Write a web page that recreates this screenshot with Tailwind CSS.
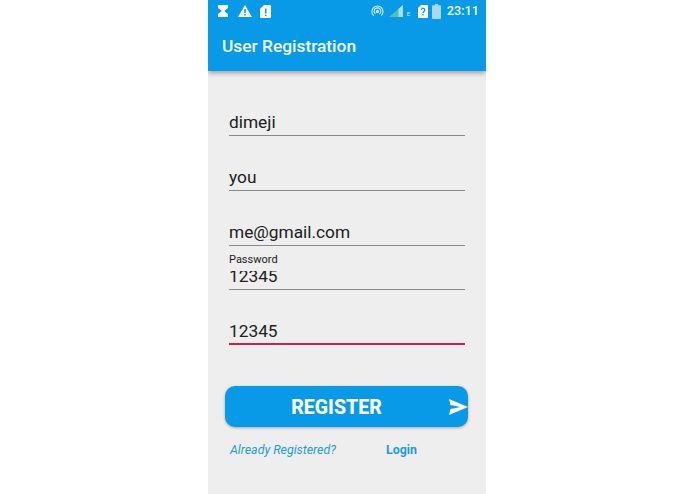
<!DOCTYPE html>
<html lang="en">
<head>
  <meta charset="UTF-8">
  <title>User Registration</title>
  <script src="https://cdn.jsdelivr.net/npm/@tailwindcss/browser@4"></script>
</head>
<body class="bg-white h-[494px] overflow-hidden antialiased font-['Roboto',sans-serif]">
  <div class="w-[278px] h-[494px] ml-[208px] bg-[#eeeeee] flex flex-col overflow-hidden">
    <!-- header -->
    <div class="h-[71px] shrink-0 bg-[#089ae6] shadow-[0_2px_5px_rgba(0,0,0,0.35)] z-10">
      <div class="h-[22px] flex items-center pl-[10px] pr-[7px] text-white">
        <svg class="w-[10px] h-[12px]" viewBox="0 0 10 12"><path fill="#fff" d="M0 0h10v3L6.200 6 10 9v3H0V9l3.800-3L0 3z"/></svg>
        <svg class="w-[14px] h-[12px] ml-[10px]" viewBox="0 0 14 12"><path fill="#fff" fill-rule="evenodd" d="M7 0l7 12H0zM6.200 4v4h1.600V4zM6.200 9v1.500h1.600V9z"/></svg>
        <svg class="w-[11px] h-[13px] ml-[8px]" viewBox="0 0 11 13"><path fill="#fff" fill-rule="evenodd" d="M4 0h6a1 1 0 0 1 1 1v11a1 1 0 0 1-1 1H1a1 1 0 0 1-1-1V4zM5 3.500v5h1.500v-5zM5 9.500v1.600h1.500V9.500z"/></svg>
        <svg class="w-[13px] h-[13px] ml-auto" viewBox="0 0 14 14" fill="none" stroke="#d5edfb" stroke-width="1.200"><path d="M3 11.500a6 6 0 1 1 8 0"/><path d="M4.800 9.500a3.600 3.600 0 1 1 4.400 0"/><circle cx="7" cy="7" r="1.200" fill="#d5edfb"/></svg>
        <svg class="w-[14px] h-[12px] ml-[5px]" viewBox="0 0 14 12"><path fill="#4fc3b0" d="M14 0v12H0z"/><path fill="#a8dcf5" d="M14 0v12H9.500V4z"/></svg>
        <span class="w-[5px] text-[6px] leading-none ml-[4px] mt-[5px] text-[#d5edfb]">E</span>
        <svg class="w-[10px] h-[13px] ml-[6px]" viewBox="0 0 10 13"><path fill="#fff" d="M3 0h6.300a.7.7 0 0 1 .7.7v11.600a.7.7 0 0 1-.7.7H.7a.7.7 0 0 1-.7-.7V3z"/><path fill="none" stroke="#089ae6" stroke-width="1.300" d="M3.400 4.900a1.700 1.700 0 1 1 2.600 1.500c-.7.4-1 .8-1 1.600M5 9v1.500"/></svg>
        <svg class="w-[9px] h-[15px] ml-[4px]" viewBox="0 0 9 15"><path fill="#a9d8f3" d="M2.800 0h3.400v1.200H8a1 1 0 0 1 1 1V14a1 1 0 0 1-1 1H1a1 1 0 0 1-1-1V2.200a1 1 0 0 1 1-1h1.800z"/></svg>
        <span class="text-[12.700px] font-medium text-[#f2faff] ml-[6px] leading-none">23:11</span>
      </div>
      <h1 class="ml-[14px] mt-[12px] text-[17.350px] leading-[24px] font-medium text-[#f4fbff]">User Registration</h1>
    </div>

    <!-- form -->
    <div class="px-[21px] pt-[40px] flex flex-col text-[17.300px] text-[#202020]">
      <div class="h-[25px] border-b border-[#8a8a8a] w-[236px] leading-[22px]">dimeji</div>
      <div class="h-[25px] mt-[30px] border-b border-[#8a8a8a] w-[236px] leading-[22px]">you</div>
      <div class="h-[25px] mt-[30px] border-b border-[#8a8a8a] w-[236px] leading-[22px]">me@gmail.com</div>
      <div class="h-[44px] border-b border-[#8a8a8a] w-[236px] relative overflow-hidden">
        <div class="absolute left-0 top-[19px] leading-[22px]">12345</div>
        <div class="absolute left-0 top-[7px] h-[18px] w-full bg-[#eeeeee] text-[11px] leading-[13px]">Password</div>
      </div>
      <div class="h-[25px] mt-[30px] border-b-2 border-[#cc1f56] w-[236px] leading-[22px]">12345</div>
    </div>

    <!-- register button -->
    <div class="relative flex items-center justify-center ml-[17px] mt-[41px] w-[243px] h-[41px] pr-[20px] pt-[2px] rounded-[10px] bg-[#089ae6] shadow-[0_1px_3px_rgba(0,0,0,0.3)] text-white text-[19.500px] font-extrabold">
      REGISTER
      <svg class="absolute right-0 top-[13px] w-[19px] h-[16px]" viewBox="0 0 19 16"><path fill="#fff" d="M0 0l19 8L0 16l1.500-6 10-2-10-2z"/></svg>
    </div>

    <div class="flex mt-[15px] ml-[22px] text-[12.400px] leading-[16px] text-[#1f9bdc]">
      <span class="italic w-[156px]">Already Registered?</span>
      <span class="font-bold">Login</span>
    </div>
  </div>
</body>
</html>
